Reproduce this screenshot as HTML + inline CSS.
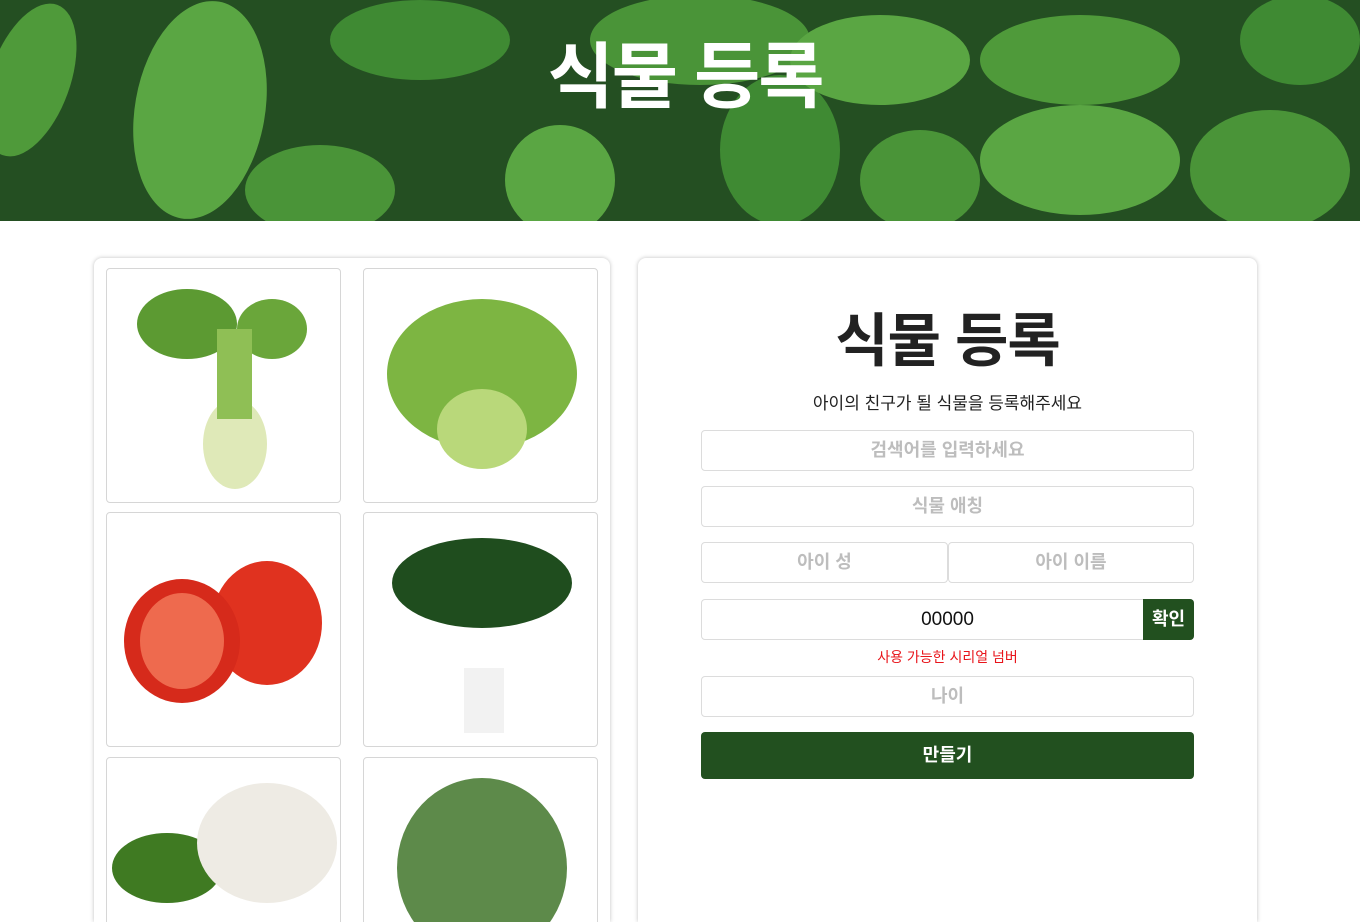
<!DOCTYPE html>
<html style="height:922px;overflow:hidden"><head><meta charset="utf-8"><style>
*{box-sizing:border-box;margin:0;padding:0}
body{width:1360px;height:922px;overflow:hidden;background:#fff;font-family:"Liberation Sans","Noto Sans CJK KR",sans-serif;position:relative}
.hero{position:absolute;left:0;top:0;width:1360px;height:221px;background:#2f6a2a;overflow:hidden}
.hero h1{position:absolute;left:0;width:1370px;top:34px;text-align:center;color:#fff;font-size:72px;font-weight:700;letter-spacing:-2px;line-height:88px}
.lcard{position:absolute;left:94px;top:258px;width:516px;height:664px;border-radius:8px 8px 0 0;box-shadow:0 0 4px rgba(0,0,0,.25);background:#fff;overflow:hidden}
.tile{position:absolute;width:235px;height:235px;border:1px solid #d6d6d6;border-radius:4px;overflow:hidden;background:#fff}
.rcard{position:absolute;left:638px;top:258px;width:619px;height:664px;border-radius:8px 8px 0 0;box-shadow:0 0 4px rgba(0,0,0,.25);background:#fff}
.in{position:absolute;height:41px;border:1px solid #dcdcdc;border-radius:4px;color:#bdbdbd;font-size:18px;font-weight:700;text-align:center;line-height:39px;background:#fff}
</style></head><body>
<div class="hero">
<svg width="1360" height="221" style="position:absolute;left:0;top:0">
<rect width="1360" height="221" fill="#244f22"/>
<g fill="#4f9a3a">
<ellipse cx="30" cy="80" rx="40" ry="80" transform="rotate(20 30 80)"/>
<ellipse cx="200" cy="110" rx="65" ry="110" transform="rotate(10 200 110)" fill="#5aa643"/>
<ellipse cx="320" cy="190" rx="75" ry="45" fill="#4a9438"/>
<ellipse cx="420" cy="40" rx="90" ry="40" fill="#3f8a33"/>
<ellipse cx="560" cy="180" rx="55" ry="55" fill="#5aa643"/>
<ellipse cx="700" cy="40" rx="110" ry="45" fill="#4a9438"/>
<ellipse cx="780" cy="150" rx="60" ry="75" fill="#3f8a33"/>
<ellipse cx="880" cy="60" rx="90" ry="45" fill="#5aa643"/>
<ellipse cx="920" cy="180" rx="60" ry="50" fill="#4a9438"/>
<ellipse cx="1080" cy="60" rx="100" ry="45" fill="#4f9a3a"/>
<ellipse cx="1080" cy="160" rx="100" ry="55" fill="#5aa643"/>
<ellipse cx="1270" cy="170" rx="80" ry="60" fill="#4a9438"/>
<ellipse cx="1300" cy="40" rx="60" ry="45" fill="#3f8a33"/>
</g></svg>
<h1>식물 등록</h1></div>
<div class="lcard">
<div class="tile" style="left:12px;top:10px"><svg width="235" height="235"><ellipse cx="128" cy="175" rx="32" ry="45" fill="#dfe9b8"/><ellipse cx="80" cy="55" rx="50" ry="35" fill="#5c9a32"/><ellipse cx="165" cy="60" rx="35" ry="30" fill="#6aa63a"/><rect x="110" y="60" width="35" height="90" fill="#8fbf55"/></svg></div>
<div class="tile" style="left:269px;top:10px"><svg width="235" height="235"><ellipse cx="118" cy="105" rx="95" ry="75" fill="#7db542"/><ellipse cx="118" cy="160" rx="45" ry="40" fill="#b9d87a"/></svg></div>
<div class="tile" style="left:12px;top:254px"><svg width="235" height="235"><ellipse cx="160" cy="110" rx="55" ry="62" fill="#e0321f"/><ellipse cx="75" cy="128" rx="58" ry="62" fill="#d62a1b"/><ellipse cx="75" cy="128" rx="42" ry="48" fill="#ee6a4e"/></svg></div>
<div class="tile" style="left:269px;top:254px"><svg width="235" height="235"><ellipse cx="118" cy="70" rx="90" ry="45" fill="#1f4d1e"/><rect x="100" y="155" width="40" height="65" fill="#f2f2f2"/></svg></div>
<div class="tile" style="left:12px;top:499px"><svg width="235" height="235"><ellipse cx="60" cy="110" rx="55" ry="35" fill="#3f7a22"/><ellipse cx="160" cy="85" rx="70" ry="60" fill="#eeebe4"/></svg></div>
<div class="tile" style="left:269px;top:499px"><svg width="235" height="235"><ellipse cx="118" cy="110" rx="85" ry="90" fill="#5d8a4a"/></svg></div>
</div>
<div class="rcard">
<div style="position:absolute;left:0;width:619px;top:44px;text-align:center;font-size:58px;font-weight:700;color:#222;letter-spacing:-1px;line-height:80px">식물 등록</div>
<div style="position:absolute;left:0;width:619px;top:131px;text-align:center;font-size:17px;color:#222">아이의 친구가 될 식물을 등록해주세요</div>
<div class="in" style="left:63px;top:172px;width:493px">검색어를 입력하세요</div>
<div class="in" style="left:63px;top:228px;width:493px">식물 애칭</div>
<div class="in" style="left:63px;top:284px;width:247px">아이 성</div>
<div class="in" style="left:310px;top:284px;width:246px">아이 이름</div>
<div class="in" style="left:63px;top:341px;width:493px;color:#111;font-weight:400;font-size:19px">00000</div>
<div style="position:absolute;left:505px;top:341px;width:51px;height:41px;background:#22501f;color:#fff;font-weight:700;font-size:18px;text-align:center;line-height:41px;border-radius:0 4px 4px 0">확인</div>
<div style="position:absolute;left:0;width:619px;top:389px;text-align:center;font-size:14px;color:#e8141a">사용 가능한 시리얼 넘버</div>
<div class="in" style="left:63px;top:418px;width:493px">나이</div>
<div style="position:absolute;left:63px;top:474px;width:493px;height:47px;background:#22501f;border-radius:4px;color:#fff;font-weight:700;font-size:18px;text-align:center;line-height:47px">만들기</div>
</div>
</body></html>
